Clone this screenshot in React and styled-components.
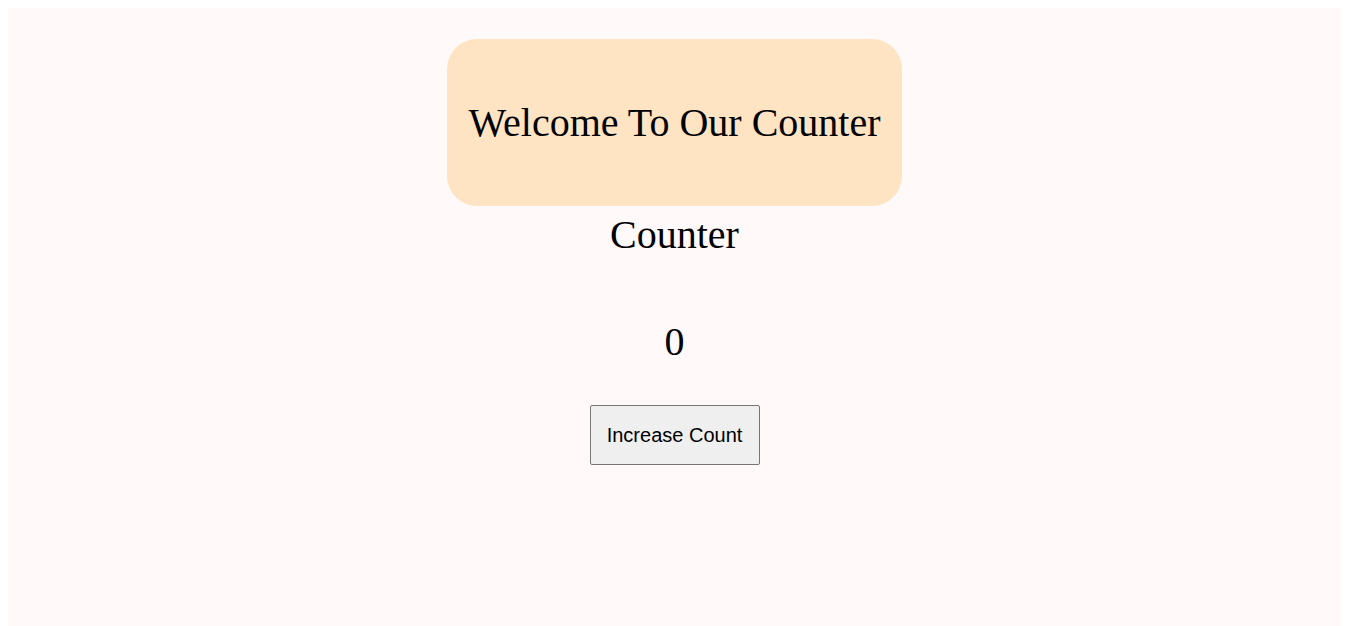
import React, { useState } from "react";
import styled, { createGlobalStyle } from "styled-components";

const Global = createGlobalStyle`
  body {
    margin: 8px 25px 8px 8px;
    background: #ffffff;
    font-family: "Liberation Serif", "Times New Roman", serif;
  }
`;

const Page = styled.div`
  background: #fffaf9;
  height: 100vh;
  display: flex;
  flex-direction: column;
  align-items: center;
  padding-top: 31px;
  box-sizing: border-box;
`;

const Banner = styled.div`
  background: #ffe4c4;
  border-radius: 30px;
  height: 167px;
  padding: 0 21px;
  box-sizing: border-box;
  display: flex;
  align-items: center;
`;

const Title = styled.h1`
  margin: 0;
  font-size: 40px;
  font-weight: normal;
  line-height: 46px;
  color: #000;
`;

const Heading = styled.h2`
  margin: ${(p) => p.$top}px 0 0;
  font-size: 40px;
  font-weight: normal;
  line-height: 46px;
  color: #000;
`;

const Button = styled.button`
  margin-top: 40px;
  width: 170px;
  height: 60px;
  font-family: "Liberation Sans", Arial, sans-serif;
  font-size: 20px;
  color: #000;
  background: #efefef;
  border: 1px solid #767676;
  border-radius: 2px;
  cursor: pointer;
`;

export default function App() {
  const [count, setCount] = useState(0);
  return (
    <>
      <Global />
      <Page>
        <Banner>
          <Title>Welcome To Our Counter</Title>
        </Banner>
        <Heading $top={6}>Counter</Heading>
        <Heading $top={61}>{count}</Heading>
        <Button onClick={() => setCount(count + 1)}>Increase Count</Button>
      </Page>
    </>
  );
}
